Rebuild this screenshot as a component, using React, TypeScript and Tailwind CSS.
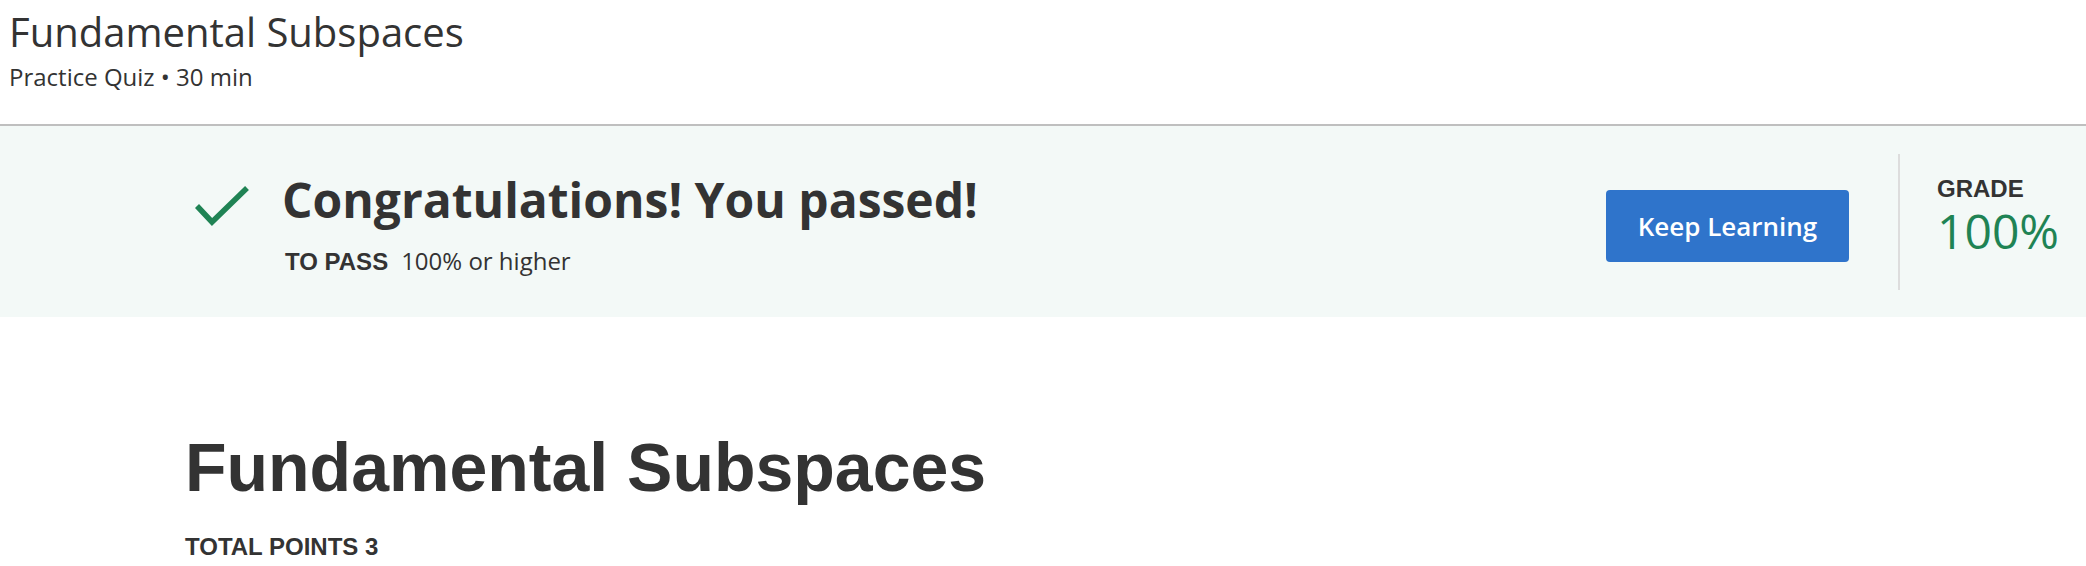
import React from "react"

const Check = () => (
  <svg width="54" height="41" viewBox="0 0 54 41" fill="none" className="shrink-0 mt-[13px]">
    <polyline points="2,21 17,37 52,3" stroke="#1f8354" strokeWidth="5.5" strokeLinecap="butt" strokeLinejoin="miter" />
  </svg>
)

export default function App() {
  return (
    <div className="w-full min-h-screen bg-white text-[#333]">
      <header className="h-[124px] pl-[9px] pt-[8px] font-['Open_Sans',sans-serif]">
        <h1 className="text-[40px] leading-[48px] font-normal">Fundamental Subspaces</h1>
        <p className="mt-[5px] text-[24px] leading-[32px]">Practice Quiz • 30 min</p>
      </header>

      <div className="border-t-2 border-[#bfbfbf] bg-[#f3f9f7] h-[193px] flex items-center pl-[195px] pr-[27px]">
        <div className="flex items-start mt-[6px]">
          <Check />
          <div className="ml-[33px]">
            <h2 className="font-['Open_Sans',sans-serif] font-bold text-[48px] leading-[55px]">
              Congratulations! You passed!
            </h2>
            <div className="mt-[18px] pl-[3px] leading-[32px] flex items-baseline">
              <span className="font-['Liberation_Sans',Arial,sans-serif] font-bold text-[24px]">TO PASS</span>
              <span className="ml-[13px] font-['Open_Sans',sans-serif] text-[24px]">100% or higher</span>
            </div>
          </div>
        </div>

        <div className="flex-1" />

        <button className="mt-[9px] w-[243px] h-[72px] rounded-[4px] bg-[#2f74cb] text-white font-['Open_Sans',sans-serif] font-semibold text-[26px]">
          Keep Learning
        </button>

        <div className="ml-[49px] w-[2px] h-[136px] bg-[#dddddd]" />

        <div className="ml-[37px] -mt-[7px] flex flex-col">
          <span className="font-['Liberation_Sans',Arial,sans-serif] font-bold text-[24px] leading-[26px]">GRADE</span>
          <span className="font-['Open_Sans',sans-serif] text-[48px] leading-[58px] text-[#1f8354]">100%</span>
        </div>
      </div>

      <section className="pl-[185px] pt-[110px] font-['Liberation_Sans',Arial,sans-serif]">
        <h2 className="font-bold text-[68px] leading-[80px]">Fundamental Subspaces</h2>
        <p className="mt-[26px] font-bold text-[24px] leading-[28px]">TOTAL POINTS 3</p>
      </section>
    </div>
  )
}
